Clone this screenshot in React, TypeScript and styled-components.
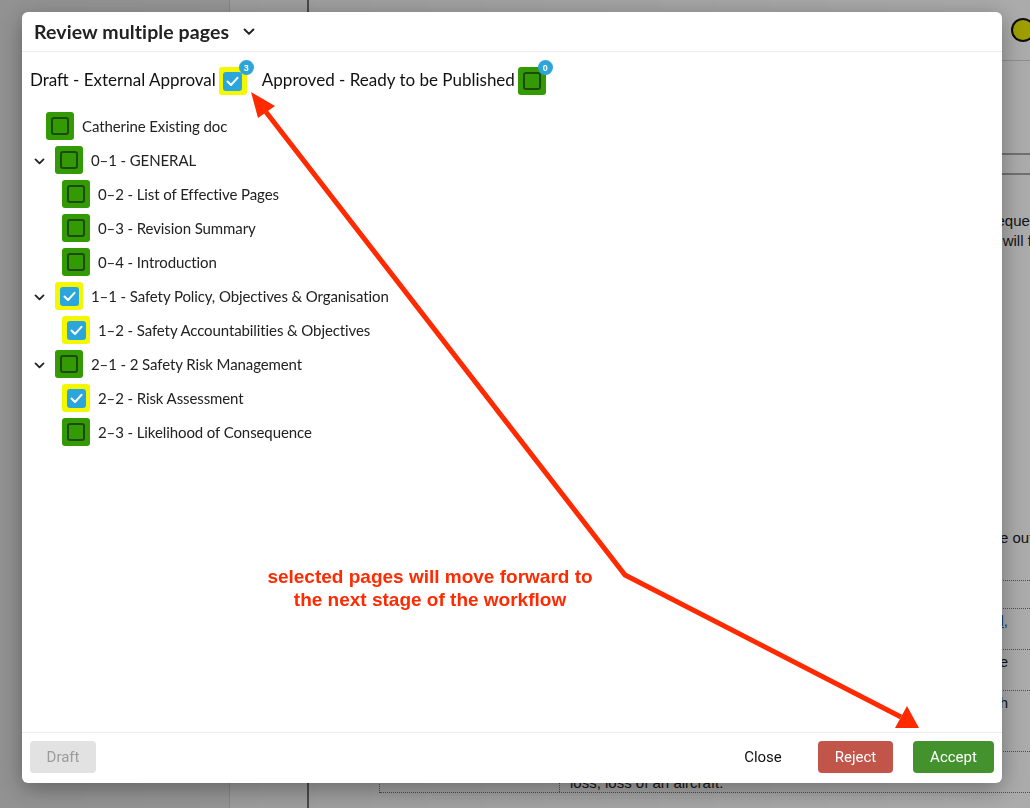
import React from "react";
import styled, { createGlobalStyle } from "styled-components";

const GlobalStyle = createGlobalStyle`
  html, body {
    margin: 0;
    padding: 0;
    height: 100%;
    overflow: hidden;
  }
  body {
    font-family: "Liberation Sans", Arial, sans-serif;
    background: #ffffff;
  }
  #root {
    height: 100%;
  }
`;

type PageNode = {
  label: string;
  indent: number;
  toggle?: boolean;
  checked?: boolean;
};

const pages: PageNode[] = [
  { label: "Catherine Existing doc", indent: 24 },
  { label: "0–1 - GENERAL", indent: 10, toggle: true },
  { label: "0–2 - List of Effective Pages", indent: 40 },
  { label: "0–3 - Revision Summary", indent: 40 },
  { label: "0–4 - Introduction", indent: 40 },
  { label: "1–1 - Safety Policy, Objectives & Organisation", indent: 10, toggle: true, checked: true },
  { label: "1–2 - Safety Accountabilities & Objectives", indent: 40, checked: true },
  { label: "2–1 - 2 Safety Risk Management", indent: 10, toggle: true },
  { label: "2–2 - Risk Assessment", indent: 40, checked: true },
  { label: "2–3 - Likelihood of Consequence", indent: 40 },
];

type TableLine = { h: number; text: string; link?: string; bottom?: boolean };

const tableRows: TableLine[] = [
  { h: 28, text: "" },
  { h: 41, text: "Refer to the risk matrix in the manual, hazard log and", link: "found," },
  { h: 41, text: "Serious injury or major damage where the outcome may be" },
  { h: 61, text: "Several deaths, serious injuries or loss of aircraft with" },
  { h: 41, text: "loss, loss of an aircraft.", bottom: true },
];

function Check({ checked, count }: { checked?: boolean; count?: number }) {
  return (
    <Box $checked={checked}>
      <Inner $checked={checked}>
        {checked && (
          <svg width="13" height="11" viewBox="0 0 13 11">
            <polyline points="1.5,5.5 5,9 11.5,1.8" fill="none" stroke="#fff" strokeWidth="2" strokeLinecap="round" strokeLinejoin="round" />
          </svg>
        )}
      </Inner>
      {count !== undefined && <Badge>{count}</Badge>}
    </Box>
  );
}

function Chevron({ size = 12 }: { size?: number }) {
  return (
    <svg width={size} height={size * 0.65} viewBox="0 0 12 8">
      <polyline points="1.5,1.5 6,6 10.5,1.5" fill="none" stroke="#222" strokeWidth="2" strokeLinecap="round" strokeLinejoin="round" />
    </svg>
  );
}

export default function App() {
  return (
    <>
      <GlobalStyle />
      <Page>
        <Sidebar />
        <Rail />
        <Main>
          <TopBar>
            <Avatar />
          </TopBar>
          <Section />
          <Tabs />
          <Para>
            <Line $bleed={24}>Each occurrence is assessed for the likelihood of its consequence</Line>
            <Line $bleed={36}>and the risk level recorded; the reviewer then decides what will follow</Line>
          </Para>
          <Para $top={277}>
            <Line $bleed={40}>Use the table below to rate each hazard on the worst possible outcome</Line>
          </Para>
          <Table>
            {tableRows.map((r, i) => (
              <TableRow key={i} $h={r.h}>
                <Cell />
                <Cell $bottom={r.bottom}>
                  {r.text}
                  {r.link && <Link> {r.link}</Link>}
                </Cell>
              </TableRow>
            ))}
          </Table>
        </Main>
      </Page>

      <Backdrop>
        <Modal>
          <Header>
            <Title>Review multiple pages</Title>
            <Chevron />
          </Header>
          <Body>
            <Stages>
              <StageLabel>Draft - External Approval</StageLabel>
              <Check checked count={3} />
              <StageLabel $gap>Approved - Ready to be Published</StageLabel>
              <Check count={0} />
            </Stages>
            <Tree>
              {pages.map((p) => (
                <Row key={p.label} $indent={p.indent}>
                  {p.toggle && (
                    <Toggle>
                      <Chevron size={11} />
                    </Toggle>
                  )}
                  <Check checked={p.checked} />
                  <RowLabel>{p.label}</RowLabel>
                </Row>
              ))}
            </Tree>
          </Body>
          <Footer>
            <Button $kind="draft">Draft</Button>
            <Spacer />
            <Button $kind="plain">Close</Button>
            <Button $kind="reject">Reject</Button>
            <Button $kind="accept">Accept</Button>
          </Footer>
        </Modal>

        <Annotation width="1030" height="808" viewBox="0 0 1030 808">
          <polyline points="266,112 625,575 901,717" fill="none" stroke="#ff2a00" strokeWidth="5" strokeLinejoin="miter" />
          <polygon points="251,92 275,106 258,118" fill="#ff2a00" />
          <polygon points="907,706 895,728 919,728" fill="#ff2a00" />
        </Annotation>
        <Note>
          selected pages will move forward to
          <br />
          the next stage of the workflow
        </Note>
      </Backdrop>
    </>
  );
}

/* background page */

const Page = styled.div`
  display: flex;
  height: 100%;
  background: #ffffff;
`;

const Sidebar = styled.aside`
  width: 229px;
  flex: none;
  background: #f4f4f4;
  border-right: 1px solid #dcdcdc;
`;

const Rail = styled.div`
  width: 77px;
  flex: none;
  border-right: 2px solid #777;
`;

const Main = styled.main`
  flex: 1;
  min-width: 0;
  display: flex;
  flex-direction: column;
  overflow: hidden;
`;

const TopBar = styled.div`
  height: 60px;
  flex: none;
  display: flex;
  align-items: center;
  justify-content: flex-end;
  border-bottom: 1px solid #d6d6d6;
`;

const Avatar = styled.div`
  width: 24px;
  height: 24px;
  box-sizing: border-box;
  border-radius: 50%;
  background: #ecec00;
  border: 2px solid #111;
  margin-right: -5px;
`;

const Section = styled.div`
  height: 92px;
  flex: none;
  border-bottom: 2px solid #a8a8a8;
`;

const Tabs = styled.div`
  height: 18px;
  flex: none;
  border-bottom: 2px solid #a8a8a8;
`;

const Para = styled.div<{ $top?: number }>`
  padding: ${(p) => p.$top ?? 36}px 0 0 30px;
  font-size: 15px;
  line-height: 20px;
  color: #222;
  white-space: nowrap;
  text-align: right;
`;

const Line = styled.div<{ $bleed: number }>`
  margin-right: -${(p) => p.$bleed}px;
`;

const Table = styled.div`
  margin: 32px 0 0 70px;
  border-left: 1px dotted #777;
  border-top: 1px dotted #777;
`;

const TableRow = styled.div<{ $h: number }>`
  height: ${(p) => p.$h - 1}px;
  display: grid;
  grid-template-columns: 179px 1fr;
  border-bottom: 1px dotted #777;
`;

const Cell = styled.div<{ $bottom?: boolean }>`
  padding: ${(p) => (p.$bottom ? "21px 18px 0 10px" : "2px 22px 0 10px")};
  font-size: 15px;
  line-height: 20px;
  color: #222;
  white-space: nowrap;
  overflow: hidden;
  text-align: ${(p) => (p.$bottom ? "left" : "right")};
  & + & {
    border-left: 1px dotted #777;
  }
`;

const Link = styled.span`
  color: #1a4fa0;
  text-decoration: underline;
`;

/* modal */

const Backdrop = styled.div`
  position: fixed;
  inset: 0;
  background: linear-gradient(90deg, rgba(0, 0, 0, 0.4), rgba(0, 0, 0, 0.33));
  padding: 12px 28px 25px 22px;
  box-sizing: border-box;
  display: flex;
`;

const Modal = styled.div`
  flex: 1;
  display: flex;
  flex-direction: column;
  background: #ffffff;
  border-radius: 6px;
  box-shadow: 0 6px 24px rgba(0, 0, 0, 0.35);
  overflow: hidden;
`;

const Header = styled.div`
  height: 39px;
  flex: none;
  display: flex;
  align-items: center;
  gap: 14px;
  padding: 0 12px;
  border-bottom: 1px solid #ececec;
`;

const Title = styled.h2`
  margin: 0;
  font-family: Lato, "Liberation Sans", sans-serif;
  font-size: 19.5px;
  font-weight: 700;
  letter-spacing: 0.1px;
  color: #222;
`;

const Body = styled.div`
  flex: 1;
  padding: 15px 8px 0 8px;
`;

const Stages = styled.div`
  display: flex;
  align-items: center;
  height: 28px;
`;

const StageLabel = styled.span<{ $gap?: boolean }>`
  font-family: Lato, "Liberation Sans", sans-serif;
  font-size: 17px;
  line-height: 20px;
  color: #111;
  margin: -3px 3px 0 ${(p) => (p.$gap ? 15 : 0)}px;
`;

const Box = styled.span<{ $checked?: boolean }>`
  position: relative;
  flex: none;
  width: 28px;
  height: 28px;
  border-radius: 3px;
  background: ${(p) => (p.$checked ? "#f5f700" : "#349a04")};
  display: flex;
  align-items: center;
  justify-content: center;
`;

const Inner = styled.span<{ $checked?: boolean }>`
  box-sizing: border-box;
  width: ${(p) => (p.$checked ? 19 : 18)}px;
  height: ${(p) => (p.$checked ? 19 : 18)}px;
  border-radius: 3px;
  background: ${(p) => (p.$checked ? "#2aa6dc" : "transparent")};
  border: ${(p) => (p.$checked ? "none" : "2px solid #1c4a0c")};
  display: flex;
  align-items: center;
  justify-content: center;
`;

const Badge = styled.span`
  position: absolute;
  top: -7px;
  right: -7px;
  width: 15px;
  height: 15px;
  border-radius: 50%;
  background: #2ea5d8;
  color: #fff;
  font-family: "Liberation Sans", sans-serif;
  font-size: 9px;
  font-weight: 700;
  display: flex;
  align-items: center;
  justify-content: center;
`;

const Tree = styled.div`
  margin-top: 17px;
  display: flex;
  flex-direction: column;
  gap: 6px;
`;

const Row = styled.div<{ $indent: number }>`
  display: flex;
  align-items: center;
  height: 28px;
  padding-left: ${(p) => p.$indent - 8}px;
`;

const Toggle = styled.span`
  width: 14px;
  margin-right: 9px;
  display: flex;
  justify-content: center;
  padding-top: 3px;
`;

const RowLabel = styled.span`
  margin-left: 8px;
  font-family: Lato, "Liberation Sans", sans-serif;
  font-size: 15px;
  letter-spacing: -0.1px;
  color: #222;
`;

const Footer = styled.div`
  flex: none;
  display: flex;
  align-items: center;
  gap: 22px;
  padding: 8px 8px 10px 8px;
  border-top: 1px solid #ececec;
`;

const Spacer = styled.div`
  flex: 1;
`;

const buttonColors = {
  draft: { bg: "#e2e2e2", fg: "#9c9c9c", w: 66 },
  plain: { bg: "transparent", fg: "#111", w: 66 },
  reject: { bg: "#c1554a", fg: "#fff", w: 75 },
  accept: { bg: "#43922e", fg: "#fff", w: 81 },
};

const Button = styled.button<{ $kind: keyof typeof buttonColors }>`
  width: ${(p) => buttonColors[p.$kind].w}px;
  height: 32px;
  border: none;
  border-radius: 4px;
  background: ${(p) => buttonColors[p.$kind].bg};
  color: ${(p) => buttonColors[p.$kind].fg};
  font-family: Roboto, "Liberation Sans", sans-serif;
  font-size: 15px;
  padding: 0;
  cursor: pointer;
  &:last-child {
    margin-left: -2px;
  }
`;

/* annotation drawn over the screenshot */

const Annotation = styled.svg`
  position: absolute;
  left: 0;
  top: 0;
  pointer-events: none;
`;

const Note = styled.div`
  position: absolute;
  left: 230px;
  top: 565px;
  width: 400px;
  text-align: center;
  font-family: "Liberation Sans", Arial, sans-serif;
  font-weight: 700;
  font-size: 19px;
  line-height: 23px;
  color: #ff2a00;
  pointer-events: none;
`;
